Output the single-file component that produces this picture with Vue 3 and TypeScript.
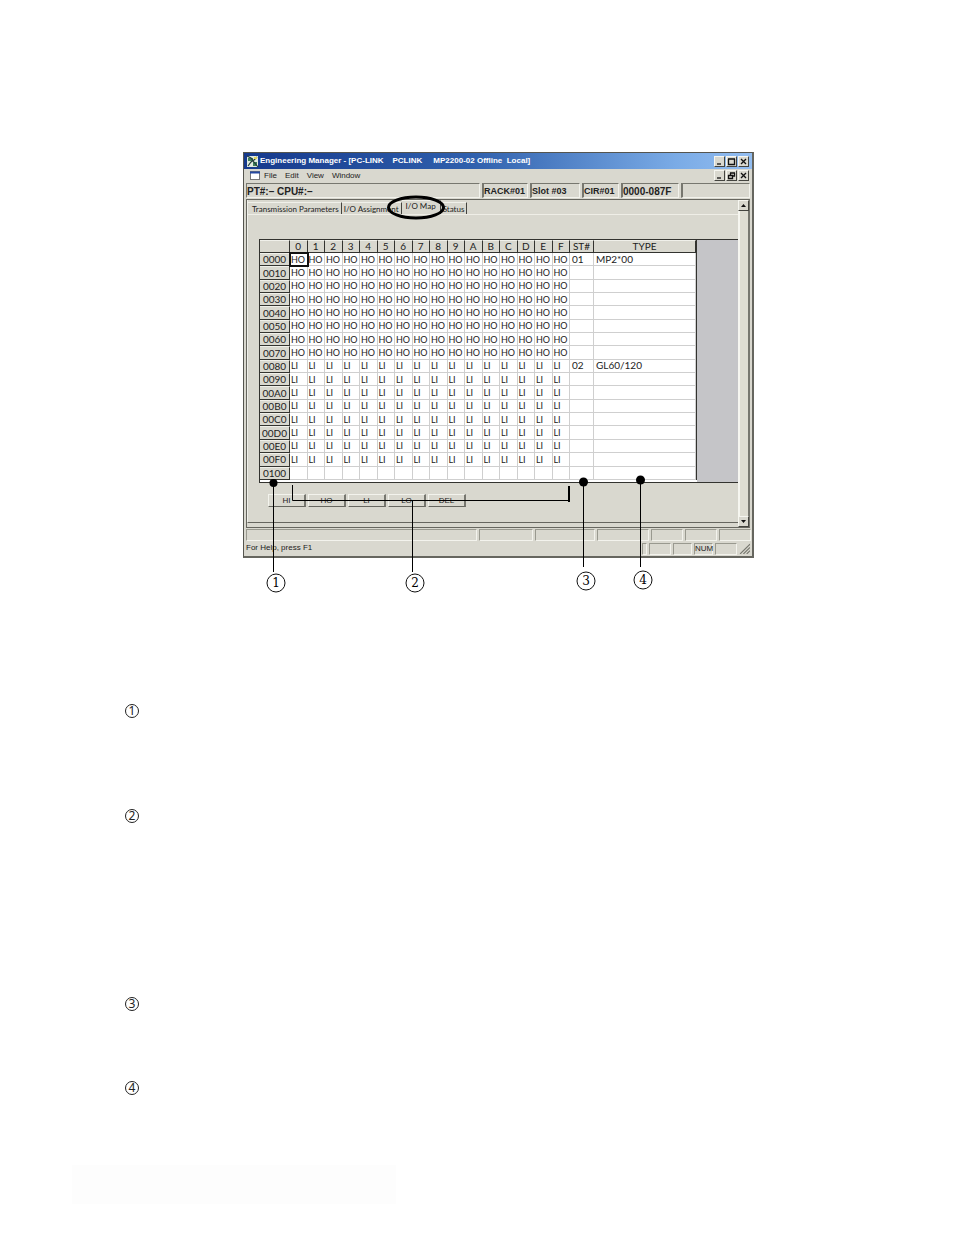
<script setup lang="ts">
import { ref } from 'vue'

interface MapRow {
  address: string
  code: string
  station: string
  type: string
}

const columns: string[] = '0123456789ABCDEF'.split('')

const rows: MapRow[] = Array.from({ length: 17 }, (_, i) => ({
  address: (i * 16).toString(16).toUpperCase().padStart(4, '0'),
  code: i < 8 ? 'HO' : i < 16 ? 'LI' : '',
  station: i === 0 ? '01' : i === 8 ? '02' : '',
  type: i === 0 ? 'MP2*00' : i === 8 ? 'GL60/120' : '',
}))

const menus: string[] = ['File', 'Edit', 'View', 'Window']
const tabs: string[] = ['Transmission Parameters', 'I/O Assignment', 'I/O Map', 'Status']
const activeTab = ref<string>('I/O Map')
const actions: string[] = ['HI', 'HO', 'LI', 'LO', 'DEL']

const callouts = [
  { n: 1, cx: 33, cy: 431 },
  { n: 2, cx: 172, cy: 431 },
  { n: 3, cx: 343, cy: 429 },
  { n: 4, cx: 400, cy: 428 },
]
</script>

<template>
  <main class="page">
    <figure class="figure">
      <section class="window">
        <header class="title">
          <svg class="app-icon" viewBox="0 0 13 13" aria-hidden="true">
            <rect x="1" y="1" width="11" height="11" fill="#dfe9df" />
            <path d="M2 3h5v3H2zM7 7h4v4H7z" fill="#3f7f5a" />
            <path d="M1 1l4 2 3 4 4 5M2 11l3-4 3-2 3-3" stroke="#233b3b" stroke-width="1.2" fill="none" />
            <path d="M8 2h3v2H8z" fill="#e0d35c" />
          </svg>
          <h1>Engineering Manager - [PC-LINK&nbsp;&nbsp;&nbsp; PCLINK&nbsp;&nbsp;&nbsp;&nbsp; MP2200-02 Offline&nbsp; Local]</h1>
          <div class="controls">
            <button type="button" aria-label="Minimize"><svg viewBox="0 0 9 9"><path d="M2 7h4" /></svg></button>
            <button type="button" aria-label="Maximize"><svg viewBox="0 0 9 9"><path d="M1 2h7M1.500 2v5.500h6V2" /></svg></button>
            <button type="button" aria-label="Close"><svg viewBox="0 0 9 9"><path d="M2 2l5 5M7 2l-5 5" /></svg></button>
          </div>
        </header>

        <nav class="menu">
          <svg class="doc-icon" viewBox="0 0 10 9" aria-hidden="true">
            <rect x=".5" y=".5" width="9" height="8" fill="#fff" stroke="#777" />
            <path d="M0 1.500h10" stroke="#2448a0" stroke-width="2" />
          </svg>
          <button v-for="m in menus" :key="m" type="button" class="menu-item">{{ m }}</button>
          <div class="controls">
            <button type="button" aria-label="Minimize document"><svg viewBox="0 0 9 9"><path d="M2 7h4" /></svg></button>
            <button type="button" aria-label="Restore document"><svg viewBox="0 0 9 9"><path d="M3 2h5M3.500 2v2M7.500 2v3H6M1 4.500h5M1.500 4v3.500h4V4" /></svg></button>
            <button type="button" aria-label="Close document"><svg viewBox="0 0 9 9"><path d="M2 2l5 5M7 2l-5 5" /></svg></button>
          </div>
        </nav>

        <div class="info">
          <span class="info-box cpu">PT#:– CPU#:–</span>
          <span class="info-box rack">RACK#01</span>
          <span class="info-box slot">Slot #03</span>
          <span class="info-box cir">CIR#01</span>
          <span class="info-box range">0000-087F</span>
          <span class="info-box rest"></span>
        </div>

        <div class="workspace">
          <div class="content">
            <div class="tabs" role="tablist">
              <button
                v-for="t in tabs"
                :key="t"
                type="button"
                role="tab"
                class="tab"
                :class="{ active: t === activeTab }"
                :aria-selected="t === activeTab"
                @click="activeTab = t"
              >{{ t }}</button>
            </div>
            <div class="panel">
              <div class="grid-frame">
                <table>
                  <colgroup>
                    <col class="c-address" />
                    <col v-for="c in columns" :key="c" />
                    <col class="c-station" />
                    <col class="c-type" />
                  </colgroup>
                  <thead>
                    <tr>
                      <th></th>
                      <th v-for="c in columns" :key="c" scope="col">{{ c }}</th>
                      <th scope="col">ST#</th>
                      <th scope="col">TYPE</th>
                    </tr>
                  </thead>
                  <tbody>
                    <tr v-for="(r, i) in rows" :key="r.address">
                      <th scope="row">{{ r.address }}</th>
                      <td v-for="(c, j) in columns" :key="c" :class="{ selected: i === 0 && j === 0 }">{{ r.code }}</td>
                      <td class="wide">{{ r.station }}</td>
                      <td class="wide">{{ r.type }}</td>
                    </tr>
                  </tbody>
                </table>
              </div>
              <div class="actions">
                <button v-for="a in actions" :key="a" type="button">{{ a }}</button>
              </div>
            </div>
          </div>
          <div class="scrollbar">
            <button type="button" aria-label="Scroll up"><svg viewBox="0 0 9 9"><path class="solid" d="M2 6l2.500-3L7 6z" /></svg></button>
            <div class="track"></div>
            <button type="button" aria-label="Scroll down"><svg viewBox="0 0 9 9"><path class="solid" d="M2 3l2.500 3L7 3z" /></svg></button>
          </div>
        </div>

        <div class="status">
          <span class="cell grow"></span>
          <span class="cell w54"></span>
          <span class="cell w60"></span>
          <span class="cell w52"></span>
          <span class="cell w32"></span>
          <span class="cell w32"></span>
          <span class="cell w32"></span>
        </div>
        <footer class="status help">
          <span class="grow">For Help, press F1</span>
          <span class="cell w4"></span>
          <span class="cell w22"></span>
          <span class="cell w18"></span>
          <span class="cell w18">NUM</span>
          <span class="cell w22"></span>
          <svg class="grip" viewBox="0 0 10 10" aria-hidden="true"><path d="M1 10l9-9M4 10l6-6M7 10l3-3" /></svg>
        </footer>
      </section>

      <svg class="annotations" viewBox="0 0 511 445" aria-hidden="true">
        <ellipse cx="173" cy="55.500" rx="27.500" ry="10.500" fill="none" stroke="#000" stroke-width="3" />
        <g fill="none" stroke="#000">
          <path d="M30.500 331V420M49.500 333V348.500H326M169.500 348V420" />
          <path d="M340.500 330V415M397.500 328V415" />
          <path d="M326 334V350" stroke-width="2" />
        </g>
        <circle cx="30.500" cy="331" r="4" />
        <circle cx="340.500" cy="330" r="4.500" />
        <circle cx="397.500" cy="328" r="4.500" />
        <g v-for="c in callouts" :key="c.n">
          <circle class="ring" :cx="c.cx" :cy="c.cy" r="9" />
          <text :x="c.cx" :y="c.cy + 4" text-anchor="middle">{{ c.n }}</text>
        </g>
      </svg>
    </figure>

    <ol class="notes">
      <li v-for="n in 4" :key="n"><span>{{ n }}</span></li>
    </ol>
    <div class="page-footer"></div>
  </main>
</template>

<style>
body {
  margin: 0;
  background: #fff;
}
</style>

<style scoped>
* {
  box-sizing: border-box;
}
.page {
  min-height: 100vh;
  padding-top: 152px;
  font-family: "Liberation Sans", Arial, sans-serif;
  font-size: 8px;
  line-height: 10px;
  color: #222;
}
button {
  margin: 0;
  padding: 0;
  border: 0;
  background: none;
  font: inherit;
  color: inherit;
}
.figure {
  position: relative;
  margin: 0 200px 0 243px;
}
.window {
  background: #d9d8cf;
  border: 1px solid #55554f;
  border-right: 2px solid #66665f;
  border-bottom: 2px solid #66665f;
}
.title {
  display: flex;
  align-items: center;
  height: 16px;
  padding: 0 3px 0 2px;
  background: linear-gradient(90deg, #16398c 0%, #2f60ad 45%, #7aabe6 85%, #93bdf0 100%);
  color: #fff;
}
.app-icon {
  width: 13px;
  height: 13px;
  margin-right: 1px;
}
h1 {
  flex: 1;
  margin: 0;
  font-size: 8px;
  font-weight: bold;
  white-space: nowrap;
}
.controls {
  display: flex;
  gap: 1px;
  margin-left: auto;
}
.controls button,
.scrollbar button {
  display: block;
  width: 11px;
  height: 11px;
  background: #d9d8cf;
  border: 1px solid #f6f6f0;
  border-right-color: #44443f;
  border-bottom-color: #44443f;
}
.controls svg,
.scrollbar svg {
  display: block;
  width: 9px;
  height: 9px;
  fill: none;
  stroke: #111;
  stroke-width: 1.3;
}
.scrollbar .solid {
  fill: #111;
  stroke: none;
}
.menu {
  display: flex;
  align-items: center;
  height: 13px;
  padding: 0 3px 0 6px;
}
.doc-icon {
  width: 10px;
  height: 9px;
  margin-right: 4px;
}
.menu-item {
  margin-right: 8px;
}
.info {
  display: flex;
  gap: 2px;
  height: 17px;
  padding: 1px 2px 1px 2px;
  font-size: 10px;
  font-weight: bold;
  line-height: 15px;
  white-space: nowrap;
}
.info-box {
  border-top: 1px solid #77776f;
  border-left: 2px solid #77776f;
  border-right: 1px solid #f2f2ec;
  border-bottom: 1px solid #f2f2ec;
}
.cpu { flex: 1; border-left-width: 1px; }
.rack { width: 46px; font-size: 9px; }
.slot { width: 50px; font-size: 9px; }
.cir { width: 37px; font-size: 9px; }
.range { width: 58px; }
.rest { width: 69px; }
.workspace {
  display: flex;
  margin: 0 2px;
  border: 1px solid #66665f;
  border-right-color: #77776f;
}
.content {
  flex: 1;
  min-width: 0;
  padding-bottom: 4px;
}
.tabs {
  display: flex;
  height: 14px;
  align-items: flex-end;
  border-left: 1px solid #f0f0ea;
}
.tab {
  height: 12px;
  padding: 0 2px;
  border-right: 1px solid #44443f;
  border-top: 1px solid #f0f0ea;
  font-family: Lato, "Liberation Sans", sans-serif;
  white-space: nowrap;
}
.tab:first-child {
  padding-left: 4px;
}
.tab.active {
  height: 14px;
  padding: 0 4px 3px;
}
.panel {
  padding: 24px 0 15px 11px;
  border-top: 1px solid #efeee7;
  border-left: 1px solid #f0f0ea;
  border-bottom: 1px solid #66665f;
}
.grid-frame {
  padding: 0 41px 2px 0;
  background: linear-gradient(#fff, #fff) left / calc(100% - 41px) no-repeat #c5c5c8;
  border: 1px solid #33332f;
  border-right: 0;
}
table {
  width: 100%;
  height: 240px;
  table-layout: fixed;
  border-collapse: separate;
  border-spacing: 0;
  border-right: 1px solid #33332f;
  font-family: Lato, "Liberation Sans", sans-serif;
  font-size: 9px;
  color: #222;
}
.c-address { width: 30px; }
.c-station { width: 24px; }
.c-type { width: 102px; }
th,
td {
  height: 13px;
  padding: 0 0 0 1px;
  line-height: 11px;
  text-align: left;
  font-weight: normal;
  white-space: nowrap;
  border-right: 1px solid #cfcfcf;
  border-bottom: 1px solid #cfcfcf;
}
th {
  padding: 0;
  text-align: center;
  font-size: 10px;
  background: #d9d8cf;
  border-right-color: #33332f;
  border-bottom-color: #33332f;
  border-top: 1px solid #f0f0ea;
}
.wide {
  padding-left: 2px;
  font-size: 10px;
}
.selected {
  outline: 2px solid #111;
  outline-offset: -1px;
}
.actions {
  display: flex;
  gap: 2px;
  margin: 11px 0 0 9px;
}
.actions button {
  width: 38px;
  height: 13px;
  border: 1px solid #f3f3ed;
  border-right: 2px solid #77776f;
  border-bottom: 1px solid #66665f;
}
.scrollbar {
  display: flex;
  flex-direction: column;
  width: 11px;
}
.track {
  flex: 1;
  background: #deddd2;
  border-left: 2px solid #f6f6f0;
  border-right: 1px solid #77776f;
}
.status {
  display: flex;
  gap: 2px;
  height: 14px;
  padding: 1px 1px 1px 2px;
}
.help {
  padding-right: 2px;
}
.cell {
  border: 1px solid #99998f;
  border-right-color: #f3f3ed;
  border-bottom-color: #f3f3ed;
}
.grow { flex: 1; }
.w4 { width: 5px; }
.w18 { width: 19px; }
.w22 { width: 22px; }
.w32 { width: 32px; }
.w52 { width: 52px; }
.w54 { width: 54px; }
.w60 { width: 60px; }
.grip {
  width: 11px;
  height: 11px;
  stroke: #77776f;
  fill: none;
}
.annotations {
  position: absolute;
  top: 0;
  left: 0;
  width: 100%;
  pointer-events: none;
}
.annotations text {
  font: 12px "DejaVu Serif", serif;
  fill: #000;
}
.annotations .ring {
  fill: #fff;
  stroke: #111;
}
.notes {
  margin: 146px 0 0 125px;
  padding: 0;
  list-style: none;
}
.notes li {
  height: 84px;
}
.notes li:first-child {
  height: 105px;
}
.notes li:nth-child(2) {
  height: 188px;
}
.notes span {
  display: block;
  width: 14px;
  height: 14px;
  border: 1px solid #222;
  border-radius: 50%;
  font: 12px/12px "Noto Sans", sans-serif;
  text-align: center;
}
.page-footer {
  width: 34%;
  height: 39px;
  margin-left: 72px;
  background: #fdfdfd;
}
</style>
